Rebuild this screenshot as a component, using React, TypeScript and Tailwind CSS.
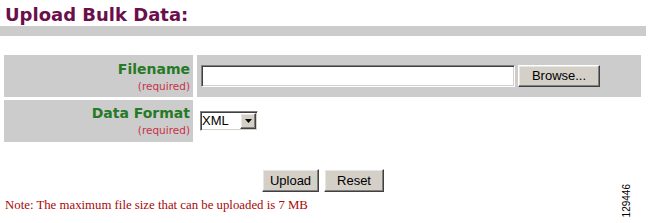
export default function App() {
  const sunken =
    "border border-t-[#808080] border-l-[#808080] border-r-white border-b-white shadow-[inset_1px_1px_0_#404040,inset_-1px_-1px_0_#d4d0c8]";
  const raised =
    "border border-t-white border-l-white border-r-[#404040] border-b-[#404040] shadow-[inset_-1px_-1px_0_#808080,inset_1px_1px_0_#e8e6e0] bg-[#d4d0c8]";
  return (
    <div className="relative w-[651px] h-[223px] bg-white overflow-hidden">
      <div className="w-[646px]">
        <h1 className="pt-[4px] pl-[5px] text-[18px] leading-[22px] font-bold text-[#6b0f4a] font-['DejaVu_Sans',sans-serif]">
          Upload Bulk Data:
        </h1>
        <div className="h-[10px] bg-[#cccccc]" />
        <div className="mt-[19px] ml-[4px] w-[637px] grid grid-cols-[189px_1fr] gap-x-[4px] gap-y-[3px] font-['DejaVu_Sans',sans-serif]">
          <div className="h-[42px] bg-[#cccccc] text-right pr-[3px] pt-[6px]">
            <div className="text-[14px] leading-[16px] font-bold text-[#267a26]">Filename</div>
            <div className="text-[10.5px] leading-[18px] text-[#c8324a]">(required)</div>
          </div>
          <div className="h-[42px] bg-[#cccccc] flex items-center pl-[4px] gap-[3px]">
            <div className={`w-[314px] h-[22px] bg-white ${sunken}`} />
            <div
              className={`w-[82px] h-[22px] flex items-center justify-center text-[13px] text-black font-['Liberation_Sans',sans-serif] ${raised}`}
            >
              Browse...
            </div>
          </div>
          <div className="h-[42px] bg-[#cccccc] text-right pr-[3px] pt-[5px]">
            <div className="text-[14px] leading-[16px] font-bold text-[#267a26]">Data Format</div>
            <div className="text-[10.5px] leading-[18px] text-[#c8324a]">(required)</div>
          </div>
          <div className="h-[42px] flex items-center pl-[3px]">
            <div className={`w-[58px] h-[20px] bg-white flex items-center ${sunken}`}>
              <span className="flex-1 pl-[1px] text-[13px] leading-[16px] text-black font-['Liberation_Sans',sans-serif]">
                XML
              </span>
              <div className={`w-[16px] h-[16px] mr-[1px] flex items-center justify-center ${raised}`}>
                <svg width="7" height="4" viewBox="0 0 7 4">
                  <path d="M0 0H7L3.5 4Z" fill="#000" />
                </svg>
              </div>
            </div>
          </div>
        </div>
        <div className="mt-[27px] flex justify-center gap-[5px] font-['Liberation_Sans',sans-serif] text-[13px] text-black">
          <div className={`w-[57px] h-[23px] flex items-center justify-center ${raised}`}>Upload</div>
          <div className={`w-[60px] h-[23px] flex items-center justify-center ${raised}`}>Reset</div>
        </div>
        <div className="mt-[6px] pl-[5px] text-[12.8px] leading-[14px] text-[#a80808] font-['Liberation_Serif',serif]">
          Note: The maximum file size that can be uploaded is 7 MB
        </div>
      </div>
      <div className="absolute left-[622px] top-[184px] [writing-mode:vertical-rl] rotate-180 text-[10px] leading-[10px] text-black font-['Liberation_Sans',sans-serif]">
        129446
      </div>
    </div>
  );
}
